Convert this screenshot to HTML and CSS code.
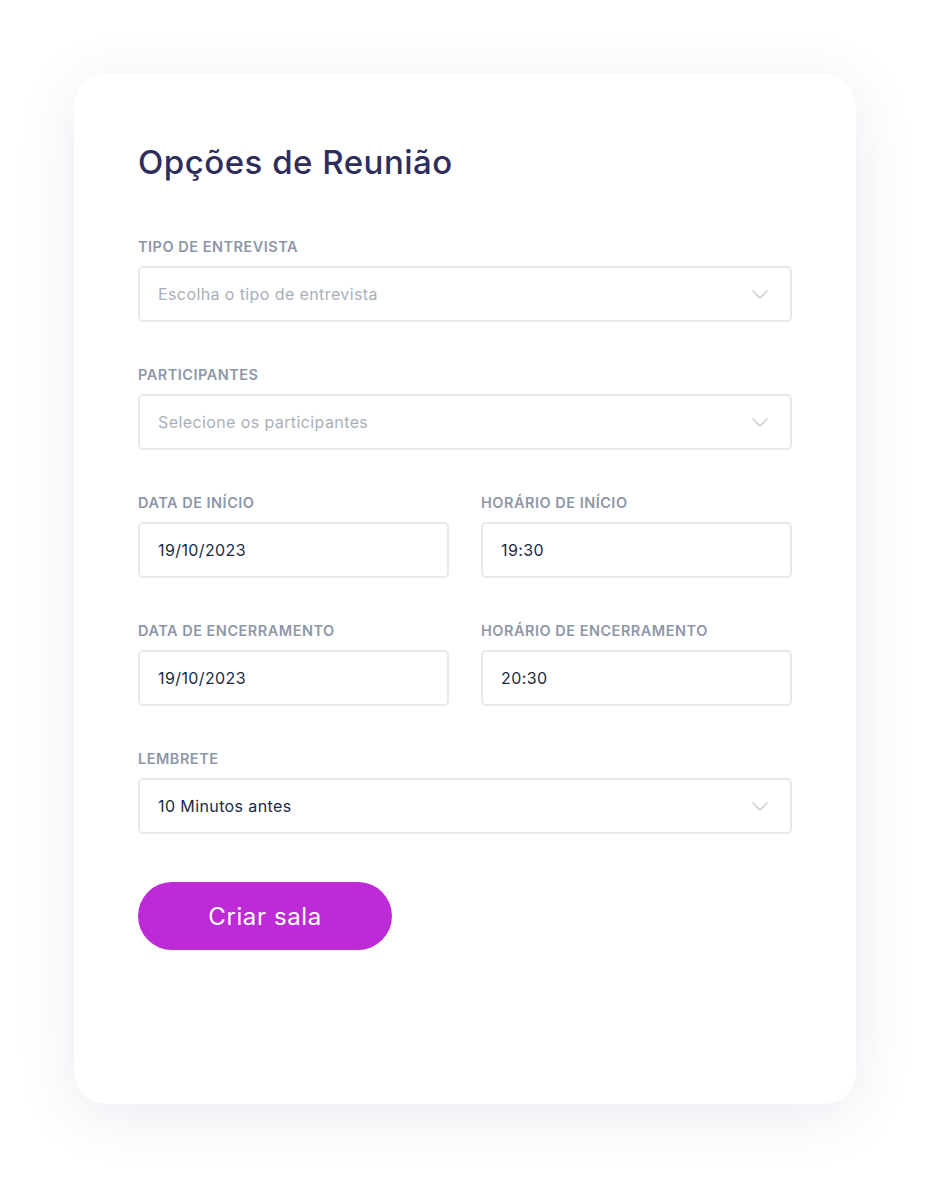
FILE: index.html
```html
<!DOCTYPE html>
<html lang="pt-BR">
<head>
  <meta charset="UTF-8">
  <title>Opções de Reunião</title>
  <link rel="stylesheet" href="styles.css">
</head>
<body>
  <div class="card">
    <h1>Opções de Reunião</h1>

    <div class="field">
      <label>TIPO DE ENTREVISTA</label>
      <div class="box select placeholder">
        <span>Escolha o tipo de entrevista</span>
        <svg class="chevron" width="16" height="9" viewBox="0 0 16 9"><path d="M1 1l7 7 7-7" fill="none" stroke="#c8ccd4" stroke-width="1.5" stroke-linecap="round" stroke-linejoin="round"/></svg>
      </div>
    </div>

    <div class="field">
      <label>PARTICIPANTES</label>
      <div class="box select placeholder">
        <span>Selecione os participantes</span>
        <svg class="chevron" width="16" height="9" viewBox="0 0 16 9"><path d="M1 1l7 7 7-7" fill="none" stroke="#c8ccd4" stroke-width="1.5" stroke-linecap="round" stroke-linejoin="round"/></svg>
      </div>
    </div>

    <div class="row">
      <div class="field">
        <label>DATA DE INÍCIO</label>
        <div class="box"><span>19/10/2023</span></div>
      </div>
      <div class="field">
        <label>HORÁRIO DE INÍCIO</label>
        <div class="box"><span>19:30</span></div>
      </div>
    </div>

    <div class="row">
      <div class="field">
        <label>DATA DE ENCERRAMENTO</label>
        <div class="box"><span>19/10/2023</span></div>
      </div>
      <div class="field">
        <label>HORÁRIO DE ENCERRAMENTO</label>
        <div class="box"><span>20:30</span></div>
      </div>
    </div>

    <div class="field">
      <label>LEMBRETE</label>
      <div class="box select">
        <span>10 Minutos antes</span>
        <svg class="chevron" width="16" height="9" viewBox="0 0 16 9"><path d="M1 1l7 7 7-7" fill="none" stroke="#c8ccd4" stroke-width="1.5" stroke-linecap="round" stroke-linejoin="round"/></svg>
      </div>
    </div>

    <button class="create">Criar sala</button>
  </div>
</body>
</html>
```

FILE: styles.css
```css
body {
  margin: 0;
  background-color: #ffffff;
  font-family: Inter, 'Noto Sans', sans-serif;
  padding: 74px 74px;
}

.card {
  width: 782px;
  height: 1030px;
  box-sizing: border-box;
  background-color: #ffffff;
  border-radius: 32px;
  box-shadow: 0 10px 60px rgba(40, 60, 120, 0.1);
  padding: 76px 64px 0 64px;
}

h1 {
  margin: 0 0 63px 0;
  font-size: 33px;
  font-weight: 500;
  color: #2f2d5b;
  line-height: 24px;
  letter-spacing: 0.5px;
}

.field {
  display: flex;
  flex-direction: column;
  margin-bottom: 43px;
}

.field label {
  font-size: 14.5px;
  font-weight: 600;
  color: #8e97a8;
  line-height: 20px;
  letter-spacing: 0.5px;
  margin-bottom: 9px;
}

.row {
  display: grid;
  grid-template-columns: 1fr 1fr;
  column-gap: 32px;
}

.box {
  height: 56px;
  box-sizing: border-box;
  border: 2px solid #e6e9ee;
  border-radius: 5px;
  padding: 0 22px 0 18px;
  display: flex;
  align-items: center;
  justify-content: space-between;
  font-size: 16px;
  letter-spacing: 0.4px;
  color: #1b2a45;
}

.placeholder {
  color: #a9afba;
}

.create {
  margin-top: 5px;
  width: 254px;
  height: 68px;
  border: none;
  border-radius: 34px;
  background-color: #bc2bd6;
  color: #ffffff;
  font-family: Inter, 'Noto Sans', sans-serif;
  font-size: 24px;
  font-weight: 400;
  letter-spacing: 0.6px;
  cursor: pointer;
}
```
